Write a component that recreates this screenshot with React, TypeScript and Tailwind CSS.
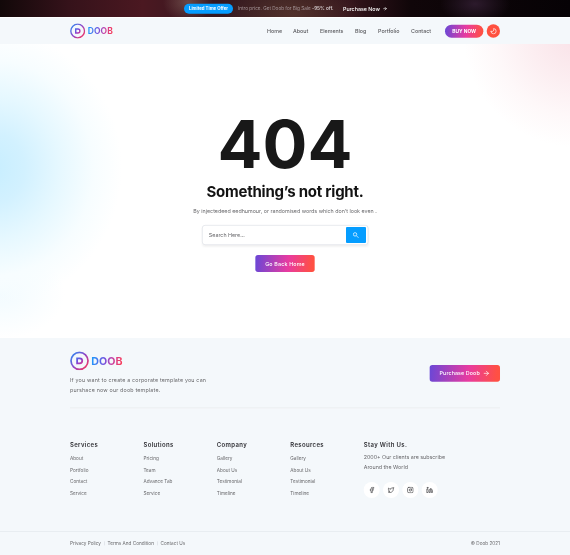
import { ArrowRight, Facebook, Instagram, Linkedin, Moon, Twitter } from "lucide-react";

const gradient = "bg-[linear-gradient(95deg,#6a47d6_0%,#e83ba0_55%,#ff5043_95%)]";

function Logo({ large = false }: { large?: boolean }) {
  const id = large ? "logo-large" : "logo-small";
  return (
    <div className="flex items-center gap-[7px]">
      <svg className={large ? "size-[57px]" : "size-[46px]"} viewBox="0 0 38 38" fill="none">
        <defs>
          <linearGradient id={id} x1="2" y1="4" x2="36" y2="34" gradientUnits="userSpaceOnUse">
            <stop stopColor="#2a8df5" />
            <stop offset=".5" stopColor="#9145c6" />
            <stop offset="1" stopColor="#ff3357" />
          </linearGradient>
          <linearGradient id={id + "-mark"} x1="12" y1="12" x2="27" y2="26" gradientUnits="userSpaceOnUse">
            <stop stopColor="#3978ee" />
            <stop offset=".5" stopColor="#8b3fd0" />
            <stop offset="1" stopColor="#f03678" />
          </linearGradient>
        </defs>
        <circle cx="19" cy="19" r="17" stroke={"url(#" + id + ")"} strokeWidth="3.4" />
        <path d="M14.2 14h5.3a5 5 0 0 1 0 10h-5.3z" stroke={"url(#" + id + "-mark)"} strokeWidth="3.5" />
      </svg>
      <span
        className={
          (large ? "text-[32px] " : "text-[25.5px] tracking-[0.4px] ") +
          "bg-[linear-gradient(100deg,#16a0ff_0%,#7250de_42%,#c743a5_65%,#ff3b4e_100%)] bg-clip-text font-bold leading-none text-transparent"
        }
      >
        DOOB
      </span>
    </div>
  );
}

const nav = [
  { label: "Home", width: "w-[78px]" },
  { label: "About", width: "w-[81px]" },
  { label: "Elements", width: "w-[105px]" },
  { label: "Blog", width: "w-[69px]" },
  { label: "Portfolio", width: "w-[99px]" },
  { label: "Contact", width: "w-[102px]" },
];

const columns = [
  { title: "Services", links: ["About", "Portfolio", "Contact", "Service"] },
  { title: "Solutions", links: ["Pricing", "Team", "Advance Tab", "Service"] },
  { title: "Company", links: ["Gallery", "About Us", "Testimonial", "Timeline"] },
  { title: "Resources", links: ["Gallery", "About Us", "Testimonial", "Timeline"] },
];

export default function App() {
  return (
    <div className="h-[555px] w-[570px] overflow-hidden">
      <div className="h-[1665px] w-[1710px] origin-top-left scale-[0.33334] whitespace-nowrap bg-white font-['Inter',sans-serif] text-base text-[#68686b]">
        <div className="flex h-[51px] items-center bg-[radial-gradient(ellipse_75px_60px_at_564px_6px,#92706688,transparent),radial-gradient(ellipse_210px_84px_at_885px_42px,#65403688,transparent),radial-gradient(ellipse_105px_60px_at_1425px_12px,#2c1a2c,transparent),linear-gradient(90deg,#120809_0%,#35121a_12%,#4b1821_25%,#351820_38%,#3b2020_50%,#35151c_61%,#100609_72%,#060205_100%)] pl-[552px]">
          <span className="flex h-[30px] w-[147px] items-center justify-center rounded-full bg-[#059dff] text-[13px] font-bold text-white">
            Limited Time Offer
          </span>
          <span className="ml-[15px] w-[315px] text-sm text-[#a6979a]">
            Intro price. Get Doob for Big Sale <b className="font-semibold text-[#d3cacc]">-95% off.</b>
          </span>
          <span className="flex items-center gap-[8px] font-medium text-white">
            Purchase Now <ArrowRight className="size-[14px]" strokeWidth={3} />
          </span>
        </div>

        <header className="mt-[3px] flex h-[78px] items-center bg-[#f4f8fb] px-[210px]">
          <Logo />
          <nav className="ml-auto flex font-medium text-[#5b5b5f]">
            {nav.map((item) => (
              <a key={item.label} className={item.width}>{item.label}</a>
            ))}
          </nav>
          <button className={gradient + " flex h-[39px] w-[115px] items-center justify-center rounded-full text-[14.5px] font-bold text-white"}>
            BUY NOW
          </button>
          <button className="ml-[10px] flex size-[40px] items-center justify-center rounded-full bg-[#ff503f] text-white">
            <Moon className="size-[21px] -scale-x-100" strokeWidth={2.3} />
          </button>
        </header>

        <main className="flex h-[882px] flex-col items-center bg-[radial-gradient(circle_340px_at_1730px_-30px,#f9e1e7_0%,#fceef1_42%,#fef8f9_72%,transparent_100%),radial-gradient(ellipse_390px_415px_at_-24px_372px,#c7eeff_0%,#d2f1ff_25%,#e6f8ff_52%,#f7fdff_78%,transparent_100%),radial-gradient(ellipse_195px_135px_at_0px_750px,#f2fbff,transparent)] pt-[196px]">
          <h1 className="text-[200px] font-bold leading-[204px] text-[#181818]">404</h1>
          <h2 className="mt-[17px] text-[45px] font-bold leading-[54px] tracking-[-0.7px] text-[#131313]">Something’s not right.</h2>
          <p className="mt-[18px] leading-6">By injectedeed eedhumour, or randomised words which don’t look even .</p>
          <div className="mt-[30px] flex h-[60px] w-[499px] items-center justify-between rounded-[9px] border-2 border-[#dddfe5] bg-white pl-[19px] pr-[5px] shadow-[0_3px_6px_#0000000d]">
            <span>Search Here...</span>
            <button className="flex h-[48px] w-[60px] items-center justify-center rounded-[3px] bg-[#059dff] text-white">
              <svg className="size-[19px]" viewBox="0 0 24 24" fill="none" stroke="currentColor" strokeWidth="2.7">
                <circle cx="9" cy="9" r="6.5" />
                <path d="m14 14 8 8" />
              </svg>
            </button>
          </div>
          <button className={gradient + " mt-[30px] flex h-[51px] w-[178px] items-center justify-center rounded-lg font-medium tracking-[0.5px] text-white"}>
            Go Back Home
          </button>
        </main>

        <footer className="h-[651px] bg-[#f4f8fb]">
          <section className="mx-[210px] flex h-[211px] justify-between border-b-3 border-[#eceef0] pt-[40px]">
            <div>
              <Logo large />
              <p className="mt-[13px] leading-[30px] tracking-[0.54px]">
                If you want to create a corporate template you can
                <br />
                purshace now our doob template.
              </p>
            </div>
            <button className={gradient + " mt-[41px] flex h-[50px] w-[211px] items-center justify-center gap-[9px] rounded-lg font-medium tracking-[0.3px] text-white"}>
              Purchase Doob <ArrowRight className="size-[22px]" strokeWidth={2.3} />
            </button>
          </section>

          <section className="mx-[210px] flex h-[368px] pt-[99px]">
            {columns.map((column) => (
              <div key={column.title} className="w-[220.3px]">
                <h3 className="text-lg/6 font-semibold tracking-[1px] text-[#303035]">{column.title}</h3>
                <ul className="mt-[9px] text-sm/[35px]">
                  {column.links.map((link) => (
                    <li key={link}>{link}</li>
                  ))}
                </ul>
              </div>
            ))}
            <div>
              <h3 className="text-lg/6 font-semibold tracking-[1px] text-[#303035]">Stay With Us.</h3>
              <p className="mt-[10px] leading-[28.5px]">
                2000+ Our clients are subscribe
                <br />
                Around the World
              </p>
              <div className="mt-[31px] flex gap-[10px] text-[#353538]">
                {[Facebook, Twitter, Instagram, Linkedin].map((Icon, index) => (
                  <a key={index} className="flex size-[48px] items-center justify-center rounded-full bg-white">
                    <Icon className="size-[20px]" strokeWidth={2.3} />
                  </a>
                ))}
              </div>
            </div>
          </section>

          <div className="flex h-[72px] items-center justify-between border-t-2 border-[#e3e7eb] px-[210px] text-sm">
            <div className="flex items-center">
              <span>Privacy Policy</span>
              <i className="mx-[9px] h-[12px] w-[2px] bg-[#dadde2]" />
              <span>Terms And Condition</span>
              <i className="mx-[9px] h-[12px] w-[2px] bg-[#dadde2]" />
              <span>Contact Us</span>
            </div>
            <span>© Doob 2021</span>
          </div>
        </footer>
      </div>
    </div>
  );
}
